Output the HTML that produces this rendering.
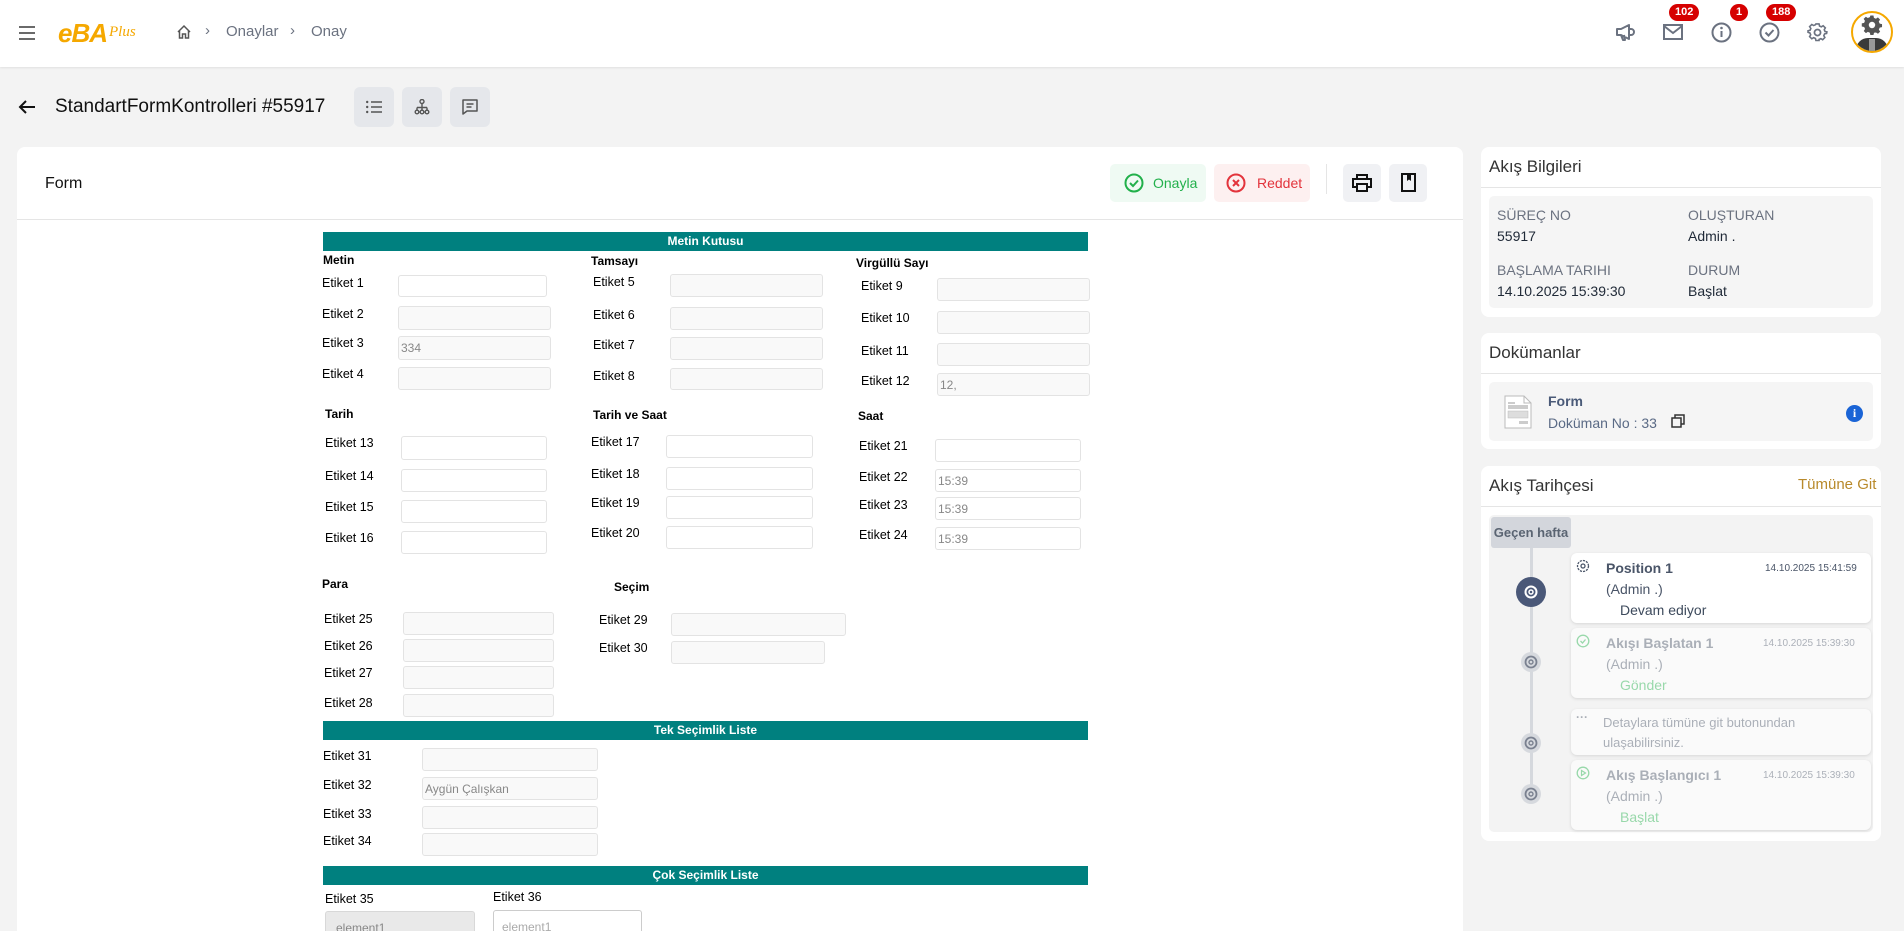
<!DOCTYPE html>
<html style="height:931px;overflow:hidden"><head><meta charset="utf-8">
<style>
*{box-sizing:border-box;margin:0;padding:0}
html,body{height:931px;overflow:hidden}
body{width:1904px;background:#f3f3f3;font-family:"Liberation Sans",sans-serif;position:relative;color:#1f2937}
.a{position:absolute}
.lb{position:absolute;font-size:12.5px;color:#000;line-height:14px;white-space:nowrap}
.hd{position:absolute;font-size:12px;font-weight:bold;color:#000;line-height:14px;white-space:nowrap}
.in{position:absolute;border:1px solid #e3e3e3;border-radius:3px;background:#f9f9f9;font-size:12px;color:#888;padding:5px 2px;line-height:12px}
.w{background:#fff}
.bar{position:absolute;left:323px;width:765px;height:19px;background:#00807f;color:#fff;font-size:12px;font-weight:bold;text-align:center;line-height:19px}
.card{position:absolute;background:#fff;border-radius:8px}
.gl{font-size:14px;color:#6b7280}
.gv{font-size:14px;color:#1f2937}
.badge{position:absolute;top:4px;height:17px;background:#d60000;color:#fff;font-size:11px;font-weight:bold;border-radius:9px;text-align:center;line-height:17px;padding:0 6px}
.tbtn{position:absolute;top:87px;width:40px;height:40px;background:#e5e7eb;border-radius:6px}
.tc{position:absolute;left:1571px;width:300px;background:#fff;border-radius:6px;box-shadow:0 1px 3px rgba(0,0,0,.12)}
.fade{opacity:.45}
</style></head><body>
<div class="a" style="left:0;top:0;width:1904px;height:67px;background:#fff;box-shadow:0 1px 2px rgba(0,0,0,.08)"></div>
<svg class="a" style="left:19px;top:26px" width="16" height="14"><path d="M0 1h16M0 7h16M0 13h16" stroke="#555" stroke-width="1.8"/></svg>
<div class="a" style="left:58px;top:18px;font-size:26px;font-weight:bold;font-style:italic;color:#f5a800;letter-spacing:-1px">eBA</div>
<div class="a" style="left:109px;top:24px;font-size:15px;font-style:italic;color:#f5a800;font-family:'Liberation Serif',serif">Plus</div>
<svg class="a" style="left:176px;top:24px" width="16" height="16" viewBox="0 0 16 16"><path d="M2 8L8 2l6 6M3.5 6.5V14h3v-4h3v4h3V6.5" fill="none" stroke="#555" stroke-width="1.5"/></svg>
<div class="a" style="left:205px;top:22px;font-size:15px;color:#6b7280">›</div>
<div class="a" style="left:226px;top:23px;font-size:15px;color:#6b7280">Onaylar</div>
<div class="a" style="left:290px;top:22px;font-size:15px;color:#6b7280">›</div>
<div class="a" style="left:311px;top:23px;font-size:15px;color:#6b7280">Onay</div>
<svg class="a" style="left:1614px;top:22px" width="22" height="20" viewBox="0 0 22 20"><path d="M3 7h4l8-4v14l-8-4H3zM7 13l2 5h2l-1-5M15 7h2a2 2 0 010 6h-2" fill="none" stroke="#6b7280" stroke-width="2" stroke-linejoin="round"/></svg>
<svg class="a" style="left:1663px;top:24px" width="20" height="16"><rect x="1" y="1" width="18" height="14" fill="none" stroke="#6b7280" stroke-width="2"/><path d="M1 2l9 7 9-7" fill="none" stroke="#6b7280" stroke-width="2"/></svg>
<svg class="a" style="left:1711px;top:22px" width="21" height="21"><circle cx="10.5" cy="10.5" r="9" fill="none" stroke="#6b7280" stroke-width="2"/><path d="M10.5 9v6" stroke="#6b7280" stroke-width="2"/><circle cx="10.5" cy="6" r="1.3" fill="#6b7280"/></svg>
<svg class="a" style="left:1759px;top:22px" width="21" height="21"><circle cx="10.5" cy="10.5" r="9" fill="none" stroke="#6b7280" stroke-width="2"/><path d="M6.5 10.5l3 3 5-5.5" fill="none" stroke="#6b7280" stroke-width="2"/></svg>
<svg class="a" style="left:1807px;top:22px" width="21" height="21" viewBox="0 0 24 24"><path d="M10 2h4l.6 2.6 2.3 1 2.3-1.4 2.8 2.8-1.4 2.3 1 2.3L24 12v0l-.4 2-2.6.6-1 2.3 1.4 2.3-2.8 2.8-2.3-1.4-2.3 1L14 23h-4l-.6-2.6-2.3-1-2.3 1.4L2 18l1.4-2.3-1-2.3L0 12.6v-2l2.6-.6 1-2.3L2 5.4 4.8 2.6l2.3 1.4 2.3-1z" fill="none" stroke="#6b7280" stroke-width="2" transform="scale(.9) translate(1.3 0.5)"/><circle cx="12" cy="12" r="3.5" fill="none" stroke="#6b7280" stroke-width="2"/></svg>
<div class="badge" style="left:1669px">102</div>
<div class="badge" style="left:1730px">1</div>
<div class="badge" style="left:1766px">188</div>
<div class="a" style="left:1851px;top:11px;width:42px;height:42px;border-radius:50%;border:2px solid #f5a800;background:#fff;overflow:hidden">
<div class="a" style="left:3px;top:25px;width:32px;height:16px;background:#3a3a3a;border-radius:12px 12px 0 0"></div>
<div class="a" style="left:16px;top:26px;width:6px;height:14px;background:#999"></div>
<svg class="a" style="left:8px;top:1px" width="22" height="22" viewBox="0 0 24 24"><path d="M10 1h4l.6 3 2.6 1.1 2.5-1.7 2.8 2.8-1.7 2.5L22 11.3l3 .7v0-.1 0v4l-3 .6-1.1 2.6 1.7 2.5-2.8 2.8-2.5-1.7L14.7 23 14 26h-4l-.6-3-2.6-1.1-2.5 1.7-2.8-2.8 1.7-2.5L2.1 15.7-1 15v-4l3-.6 1.1-2.6-1.7-2.5 2.8-2.8 2.5 1.7L9.4 3z" fill="#555" transform="scale(.85) translate(2 1)"/><circle cx="12" cy="12" r="3.5" fill="#fff"/></svg>
</div>
<svg class="a" style="left:18px;top:99px" width="18" height="16"><path d="M17 8H2M8 2L2 8l6 6" fill="none" stroke="#111" stroke-width="2"/></svg>
<div class="a" style="left:55px;top:96px;font-size:19px;color:#111">StandartFormKontrolleri #55917</div>
<div class="tbtn" style="left:354px"><svg class="a" style="left:12px;top:13px" width="16" height="14"><path d="M5 2h11M5 7h11M5 12h11" stroke="#555" stroke-width="1.6"/><circle cx="1.2" cy="2" r="1.2" fill="#555"/><circle cx="1.2" cy="7" r="1.2" fill="#555"/><circle cx="1.2" cy="12" r="1.2" fill="#555"/></svg></div>
<div class="tbtn" style="left:402px"><svg class="a" style="left:12px;top:12px" width="16" height="16"><circle cx="8" cy="2.5" r="2" fill="none" stroke="#555" stroke-width="1.4"/><path d="M8 4.5v4M3 8.5h10M3 8.5v3M13 8.5v3M8 8.5v3" stroke="#555" stroke-width="1.4"/><circle cx="3" cy="13" r="1.8" fill="none" stroke="#555" stroke-width="1.4"/><circle cx="8" cy="13" r="1.8" fill="none" stroke="#555" stroke-width="1.4"/><circle cx="13" cy="13" r="1.8" fill="none" stroke="#555" stroke-width="1.4"/></svg></div>
<div class="tbtn" style="left:450px"><svg class="a" style="left:12px;top:12px" width="16" height="16"><path d="M1 1h14v11H5l-4 3z" fill="none" stroke="#555" stroke-width="1.5" stroke-linejoin="round"/><path d="M4.5 5h7M4.5 8h5" stroke="#555" stroke-width="1.5"/></svg></div>
<div class="card" style="left:17px;top:147px;width:1446px;height:784px;border-radius:8px 8px 0 0"></div>
<div class="a" style="left:17px;top:219px;width:1446px;height:1px;background:#e5e5e5"></div>
<div class="a" style="left:45px;top:175px;font-size:16px;color:#111">Form</div>
<div class="a" style="left:1110px;top:164px;width:96px;height:38px;background:#effaf3;border-radius:5px"><svg class="a" style="left:14px;top:9px" width="20" height="20"><circle cx="10" cy="10" r="8.5" fill="none" stroke="#22b04b" stroke-width="2"/><path d="M6 10l3 3 5-5.5" fill="none" stroke="#22b04b" stroke-width="2"/></svg><div class="a" style="left:43px;top:11px;font-size:14px;color:#22b04b">Onayla</div></div>
<div class="a" style="left:1214px;top:164px;width:96px;height:38px;background:#fdf0f0;border-radius:5px"><svg class="a" style="left:12px;top:9px" width="20" height="20"><circle cx="10" cy="10" r="8.5" fill="none" stroke="#e3343c" stroke-width="2"/><path d="M7 7l6 6M13 7l-6 6" stroke="#e3343c" stroke-width="2"/></svg><div class="a" style="left:43px;top:11px;font-size:14px;color:#e3343c">Reddet</div></div>
<div class="a" style="left:1326px;top:164px;width:1px;height:30px;background:#e5e5e5"></div>
<div class="a" style="left:1343px;top:164px;width:38px;height:38px;background:#f0f1f4;border-radius:5px"><svg class="a" style="left:9px;top:10px" width="20" height="18"><path d="M5 5V1h10v4M5 13H1V5h18v8h-4" fill="none" stroke="#111" stroke-width="2"/><rect x="5" y="10" width="10" height="7" fill="none" stroke="#111" stroke-width="2"/></svg></div>
<div class="a" style="left:1389px;top:164px;width:38px;height:38px;background:#f0f1f4;border-radius:5px"><svg class="a" style="left:12px;top:9px" width="15" height="19"><rect x="1" y="1" width="13" height="17" fill="none" stroke="#111" stroke-width="2"/><path d="M6 1v7l2-1.5 2 1.5V1" fill="#111"/></svg></div>

<div class="bar" style="top:232px">Metin Kutusu</div>
<div class="hd" style="left:323px;top:253px">Metin</div>
<div class="hd" style="left:591px;top:254px">Tamsayı</div>
<div class="hd" style="left:856px;top:256px">Virgüllü Sayı</div>
<div class="lb" style="left:322px;top:276px">Etiket 1</div><div class="in w" style="left:398px;top:275px;width:149px;height:22px"></div>
<div class="lb" style="left:322px;top:307px">Etiket 2</div><div class="in" style="left:398px;top:306px;width:153px;height:24px"></div>
<div class="lb" style="left:322px;top:336px">Etiket 3</div><div class="in" style="left:398px;top:336px;width:153px;height:24px">334</div>
<div class="lb" style="left:322px;top:367px">Etiket 4</div><div class="in" style="left:398px;top:367px;width:153px;height:23px"></div>
<div class="lb" style="left:593px;top:275px">Etiket 5</div><div class="in" style="left:670px;top:274px;width:153px;height:23px"></div>
<div class="lb" style="left:593px;top:308px">Etiket 6</div><div class="in" style="left:670px;top:307px;width:153px;height:23px"></div>
<div class="lb" style="left:593px;top:338px">Etiket 7</div><div class="in" style="left:670px;top:337px;width:153px;height:23px"></div>
<div class="lb" style="left:593px;top:369px">Etiket 8</div><div class="in" style="left:670px;top:368px;width:153px;height:22px"></div>
<div class="lb" style="left:861px;top:279px">Etiket 9</div><div class="in" style="left:937px;top:278px;width:153px;height:23px"></div>
<div class="lb" style="left:861px;top:311px">Etiket 10</div><div class="in" style="left:937px;top:311px;width:153px;height:23px"></div>
<div class="lb" style="left:861px;top:344px">Etiket 11</div><div class="in" style="left:937px;top:343px;width:153px;height:23px"></div>
<div class="lb" style="left:861px;top:374px">Etiket 12</div><div class="in" style="left:937px;top:373px;width:153px;height:23px">12,</div>

<div class="hd" style="left:325px;top:407px">Tarih</div>
<div class="hd" style="left:593px;top:408px">Tarih ve Saat</div>
<div class="hd" style="left:858px;top:409px">Saat</div>
<div class="lb" style="left:325px;top:436px">Etiket 13</div><div class="in w" style="left:401px;top:436px;width:146px;height:24px"></div>
<div class="lb" style="left:325px;top:469px">Etiket 14</div><div class="in w" style="left:401px;top:469px;width:146px;height:23px"></div>
<div class="lb" style="left:325px;top:500px">Etiket 15</div><div class="in w" style="left:401px;top:500px;width:146px;height:23px"></div>
<div class="lb" style="left:325px;top:531px">Etiket 16</div><div class="in w" style="left:401px;top:531px;width:146px;height:23px"></div>
<div class="lb" style="left:591px;top:435px">Etiket 17</div><div class="in w" style="left:666px;top:435px;width:147px;height:23px"></div>
<div class="lb" style="left:591px;top:467px">Etiket 18</div><div class="in w" style="left:666px;top:467px;width:147px;height:23px"></div>
<div class="lb" style="left:591px;top:496px">Etiket 19</div><div class="in w" style="left:666px;top:496px;width:147px;height:23px"></div>
<div class="lb" style="left:591px;top:526px">Etiket 20</div><div class="in w" style="left:666px;top:526px;width:147px;height:23px"></div>
<div class="lb" style="left:859px;top:439px">Etiket 21</div><div class="in w" style="left:935px;top:439px;width:146px;height:23px"></div>
<div class="lb" style="left:859px;top:470px">Etiket 22</div><div class="in w" style="left:935px;top:469px;width:146px;height:23px">15:39</div>
<div class="lb" style="left:859px;top:498px">Etiket 23</div><div class="in w" style="left:935px;top:497px;width:146px;height:23px">15:39</div>
<div class="lb" style="left:859px;top:528px">Etiket 24</div><div class="in w" style="left:935px;top:527px;width:146px;height:23px">15:39</div>

<div class="hd" style="left:322px;top:577px">Para</div>
<div class="hd" style="left:614px;top:580px">Seçim</div>
<div class="lb" style="left:324px;top:612px">Etiket 25</div><div class="in" style="left:403px;top:612px;width:151px;height:23px"></div>
<div class="lb" style="left:324px;top:639px">Etiket 26</div><div class="in" style="left:403px;top:639px;width:151px;height:23px"></div>
<div class="lb" style="left:324px;top:666px">Etiket 27</div><div class="in" style="left:403px;top:666px;width:151px;height:23px"></div>
<div class="lb" style="left:324px;top:696px">Etiket 28</div><div class="in" style="left:403px;top:694px;width:151px;height:23px"></div>
<div class="lb" style="left:599px;top:613px">Etiket 29</div><div class="in" style="left:671px;top:613px;width:175px;height:23px"></div>
<div class="lb" style="left:599px;top:641px">Etiket 30</div><div class="in" style="left:671px;top:641px;width:154px;height:23px"></div>

<div class="bar" style="top:721px">Tek Seçimlik Liste</div>
<div class="lb" style="left:323px;top:749px">Etiket 31</div><div class="in" style="left:422px;top:748px;width:176px;height:23px"></div>
<div class="lb" style="left:323px;top:778px">Etiket 32</div><div class="in" style="left:422px;top:777px;width:176px;height:23px">Aygün Çalışkan</div>
<div class="lb" style="left:323px;top:807px">Etiket 33</div><div class="in" style="left:422px;top:806px;width:176px;height:23px"></div>
<div class="lb" style="left:323px;top:834px">Etiket 34</div><div class="in" style="left:422px;top:833px;width:176px;height:23px"></div>
<div class="bar" style="top:866px">Çok Seçimlik Liste</div>
<div class="lb" style="left:325px;top:892px">Etiket 35</div>
<div class="lb" style="left:493px;top:890px">Etiket 36</div>
<div class="in" style="left:325px;top:911px;width:150px;height:20px;background:#e9e9e9;border-color:#d8d8d8;border-bottom:none;border-radius:3px 3px 0 0;padding:10px 10px 0;overflow:hidden">element1</div>
<div class="in w" style="left:493px;top:910px;width:149px;height:21px;border-color:#ccc;border-bottom:none;border-radius:3px 3px 0 0;padding:10px 8px 0;color:#aaa;overflow:hidden">element1</div>

<div class="card" style="left:1481px;top:147px;width:400px;height:170px"></div>
<div class="a" style="left:1489px;top:157px;font-size:17px;color:#333">Akış Bilgileri</div>
<div class="a" style="left:1481px;top:187px;width:400px;height:1px;background:#e5e5e5"></div>
<div class="a" style="left:1489px;top:196px;width:384px;height:112px;background:#f5f5f5;border-radius:5px"></div>
<div class="a gl" style="left:1497px;top:207px">SÜREÇ NO</div>
<div class="a gv" style="left:1497px;top:228px">55917</div>
<div class="a gl" style="left:1497px;top:262px">BAŞLAMA TARIHI</div>
<div class="a gv" style="left:1497px;top:283px">14.10.2025 15:39:30</div>
<div class="a gl" style="left:1688px;top:207px">OLUŞTURAN</div>
<div class="a gv" style="left:1688px;top:228px">Admin .</div>
<div class="a gl" style="left:1688px;top:262px">DURUM</div>
<div class="a gv" style="left:1688px;top:283px">Başlat</div>

<div class="card" style="left:1481px;top:333px;width:400px;height:116px"></div>
<div class="a" style="left:1489px;top:343px;font-size:17px;color:#333">Dokümanlar</div>
<div class="a" style="left:1481px;top:373px;width:400px;height:1px;background:#e5e5e5"></div>
<div class="a" style="left:1489px;top:382px;width:384px;height:59px;background:#f5f5f5;border-radius:5px"></div>
<svg class="a" style="left:1504px;top:395px" width="28" height="34"><path d="M1 1h19l7 7v25H1z" fill="#fff" stroke="#bbb"/><path d="M20 1v7h7" fill="none" stroke="#bbb"/><rect x="4" y="10" width="20" height="4" fill="#ccc"/><rect x="4" y="16" width="20" height="7" fill="#ddd" stroke="#bbb" stroke-width=".5"/><rect x="15" y="26" width="9" height="3" fill="#ccc"/><rect x="4" y="7" width="7" height="2" fill="#ccc"/></svg>
<div class="a" style="left:1548px;top:393px;font-size:14px;font-weight:bold;color:#4a5a78">Form</div>
<div class="a" style="left:1548px;top:415px;font-size:14px;color:#5a6a85">Doküman No : 33</div>
<svg class="a" style="left:1671px;top:414px" width="15" height="15"><rect x="1" y="4" width="9" height="9" fill="none" stroke="#333" stroke-width="1.5"/><path d="M4 4V1h9v9h-3" fill="none" stroke="#333" stroke-width="1.5"/></svg>
<div class="a" style="left:1846px;top:405px;width:17px;height:17px;border-radius:50%;background:#1a64d6;color:#fff;font-size:12px;font-weight:bold;text-align:center;line-height:17px;font-family:'Liberation Serif',serif">i</div>

<div class="card" style="left:1481px;top:466px;width:400px;height:375px"></div>
<div class="a" style="left:1489px;top:476px;font-size:17px;color:#333">Akış Tarihçesi</div>
<div class="a" style="left:1798px;top:476px;font-size:15px;color:#b8892a">Tümüne Git</div>
<div class="a" style="left:1481px;top:506px;width:400px;height:1px;background:#e5e5e5"></div>
<div class="a" style="left:1489px;top:515px;width:384px;height:317px;background:#f3f3f3;border-radius:5px"></div>
<div class="a" style="left:1491px;top:517px;width:80px;height:31px;background:#d3d6dc;border-radius:3px;font-size:13px;font-weight:bold;color:#5a6472;text-align:center;line-height:31px">Geçen hafta</div>
<div class="a" style="left:1530px;top:548px;width:3px;height:248px;background:#d5d8dd"></div>
<div class="a" style="left:1516px;top:577px;width:30px;height:30px;border-radius:50%;background:#4a5878"></div>
<svg class="a" style="left:1524px;top:585px" width="14" height="14"><circle cx="7" cy="7" r="5.5" fill="none" stroke="#fff" stroke-width="2"/><circle cx="7" cy="7" r="2" fill="none" stroke="#fff" stroke-width="1.5"/></svg>
<svg class="a" style="left:1521px;top:652px" width="20" height="20"><circle cx="10" cy="10" r="10" fill="#d6d9de"/><circle cx="10" cy="10" r="5.5" fill="none" stroke="#7a8190" stroke-width="1.8"/><circle cx="10" cy="10" r="2" fill="none" stroke="#7a8190" stroke-width="1.4"/></svg>
<svg class="a" style="left:1521px;top:733px" width="20" height="20"><circle cx="10" cy="10" r="10" fill="#d6d9de"/><circle cx="10" cy="10" r="5.5" fill="none" stroke="#7a8190" stroke-width="1.8"/><circle cx="10" cy="10" r="2" fill="none" stroke="#7a8190" stroke-width="1.4"/></svg>
<svg class="a" style="left:1521px;top:784px" width="20" height="20"><circle cx="10" cy="10" r="10" fill="#d6d9de"/><circle cx="10" cy="10" r="5.5" fill="none" stroke="#7a8190" stroke-width="1.8"/><circle cx="10" cy="10" r="2" fill="none" stroke="#7a8190" stroke-width="1.4"/></svg>

<div class="tc" style="top:553px;height:70px"></div>
<svg class="a" style="left:1576px;top:559px" width="14" height="14" viewBox="0 0 14 14"><circle cx="7" cy="7" r="5.5" fill="none" stroke="#4a5568" stroke-width="1.3" stroke-dasharray="2.2 1"/><circle cx="7" cy="7" r="2" fill="none" stroke="#4a5568" stroke-width="1.3"/></svg>
<div class="a" style="left:1606px;top:560px;font-size:14px;font-weight:bold;color:#4a5568">Position 1</div>
<div class="a" style="left:1765px;top:563px;font-size:10px;color:#4a5568">14.10.2025 15:41:59</div>
<div class="a" style="left:1606px;top:581px;font-size:14px;color:#4a5568">(Admin .)</div>
<div class="a" style="left:1620px;top:602px;font-size:14px;color:#3d4a5c">Devam ediyor</div>

<div class="tc" style="top:628px;height:70px;background:#fafafa"></div>
<div class="fade">
<svg class="a" style="left:1576px;top:634px" width="14" height="14"><circle cx="7" cy="7" r="5.8" fill="none" stroke="#22b04b" stroke-width="1.3"/><path d="M4.5 7l2 2 3-3.5" fill="none" stroke="#22b04b" stroke-width="1.3"/></svg>
<div class="a" style="left:1606px;top:635px;font-size:14px;font-weight:bold;color:#4a5568">Akışı Başlatan 1</div>
<div class="a" style="left:1763px;top:638px;font-size:10px;color:#4a5568">14.10.2025 15:39:30</div>
<div class="a" style="left:1606px;top:656px;font-size:14px;color:#4a5568">(Admin .)</div>
<div class="a" style="left:1620px;top:677px;font-size:14px;color:#22b04b">Gönder</div>
</div>
<div class="tc" style="top:709px;height:46px;background:#fafafa"></div>
<div class="fade">
<div class="a" style="left:1576px;top:710px;font-size:12px;color:#4a5568;font-weight:bold">···</div>
<div class="a" style="left:1603px;top:715px;font-size:13px;color:#4a5568">Detaylara tümüne git butonundan</div>
<div class="a" style="left:1603px;top:735px;font-size:13px;color:#4a5568">ulaşabilirsiniz.</div>
</div>
<div class="tc" style="top:760px;height:70px;background:#fafafa"></div>
<div class="fade">
<svg class="a" style="left:1576px;top:766px" width="14" height="14"><circle cx="7" cy="7" r="5.8" fill="none" stroke="#22b04b" stroke-width="1.3"/><path d="M5.5 4.5v5l4-2.5z" fill="none" stroke="#22b04b" stroke-width="1.2"/></svg>
<div class="a" style="left:1606px;top:767px;font-size:14px;font-weight:bold;color:#4a5568">Akış Başlangıcı 1</div>
<div class="a" style="left:1763px;top:770px;font-size:10px;color:#4a5568">14.10.2025 15:39:30</div>
<div class="a" style="left:1606px;top:788px;font-size:14px;color:#4a5568">(Admin .)</div>
<div class="a" style="left:1620px;top:809px;font-size:14px;color:#22b04b">Başlat</div>
</div>
</body></html>
